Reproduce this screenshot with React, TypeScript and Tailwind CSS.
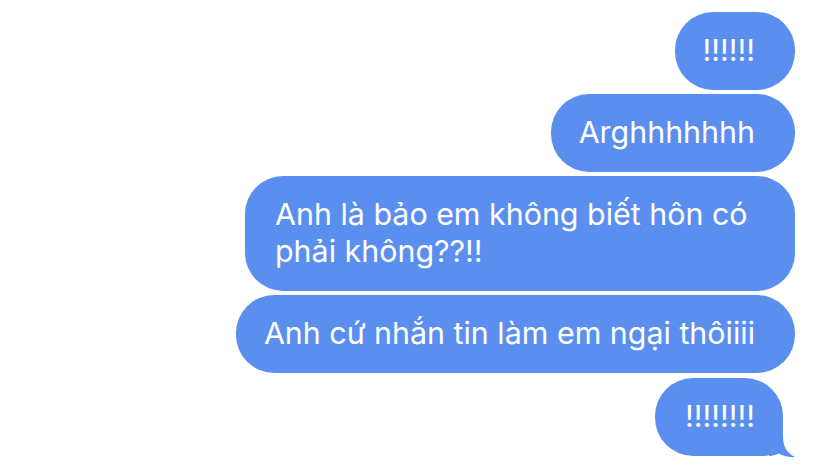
import React from "react";

const bubble =
  "relative bg-[#5b8fef] text-white text-[30.4px] leading-[37px] pt-[20px] pb-[21px] pl-[28px] pr-[40px] rounded-[38px]";

const App: React.FC = () => {
  return (
    <div
      className="w-[828px] h-[474px] bg-white overflow-hidden"
      style={{ fontFamily: "Inter, 'Noto Sans', sans-serif" }}
    >
      <div className="flex flex-col items-end gap-[4px] pt-[12px] pr-[33px]">
        <div className={bubble}>!!!!!!</div>
        <div className={bubble}>Arghhhhhhh</div>
        <div className={bubble + " w-[550px] pl-[30px]"}>
          Anh là bảo em không biết hôn có
          <br />
          phải không??!!
        </div>
        <div className={bubble}>Anh cứ nhắn tin làm em ngại thôiiii</div>

        {/* last message with tail */}
        <div className="relative mr-[12px] mt-[1px] bg-[#5b8fef] text-white text-[30.4px] leading-[37px] pt-[20px] pb-[21px] pl-[30px] pr-[28px] rounded-[38px] rounded-br-[20px]">
          !!!!!!!!
          <svg
            className="absolute right-[-12px] bottom-[-2px]"
            width="26"
            height="30"
            viewBox="0 0 26 30"
          >
            <path
              d="M0,0 L14,0 L14,8 C14,19 18,25 26,29 C20,29.6 14,28 10,25.5 C7,27 3,27.8 0,28 Z"
              fill="#5b8fef"
            />
          </svg>
        </div>
      </div>
    </div>
  );
};

export default App;
